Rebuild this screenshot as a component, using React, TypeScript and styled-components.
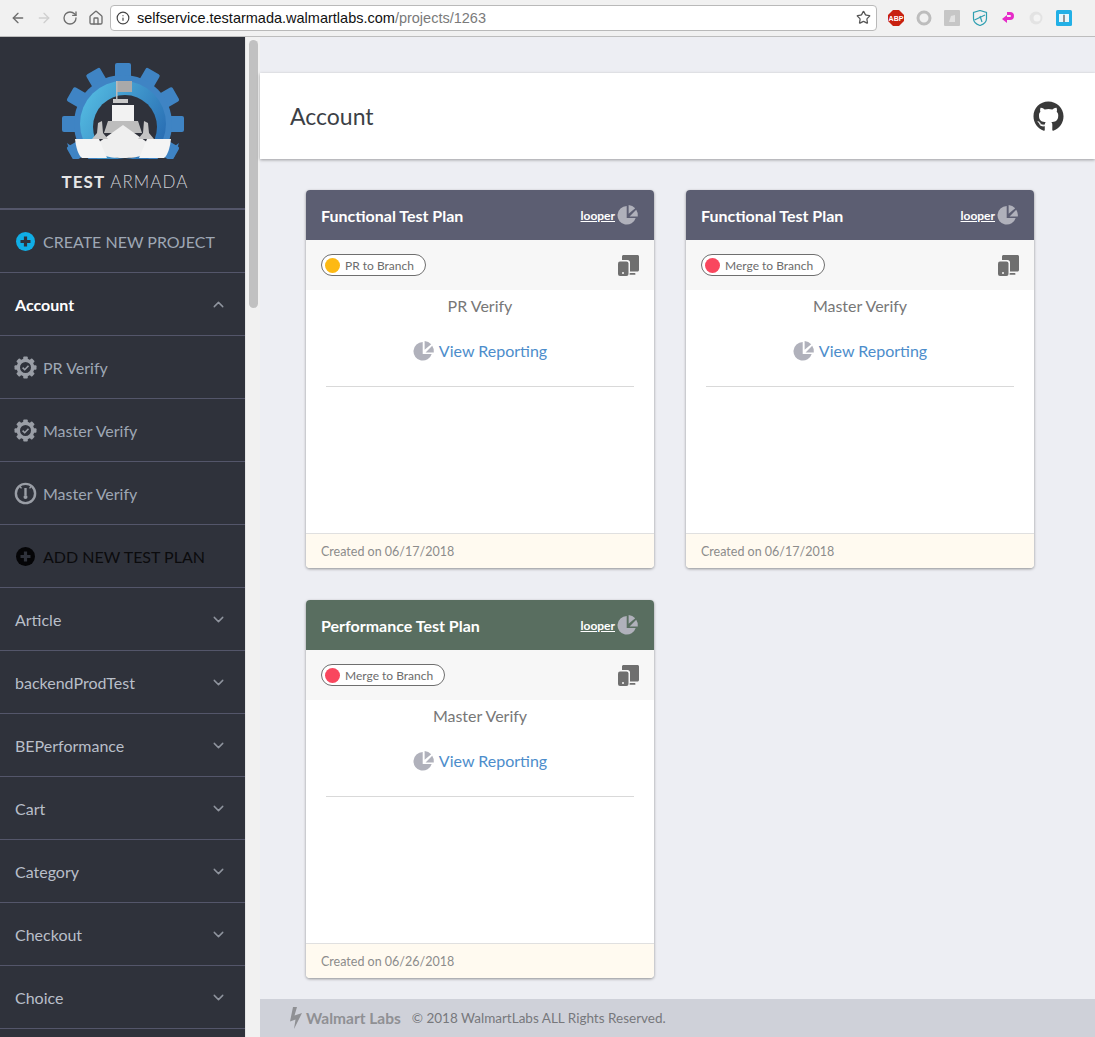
import React from "react";
import styled, { createGlobalStyle } from "styled-components";
import { FaGithub } from "react-icons/fa";
import { ChevronDown, ChevronUp, ArrowLeft, ArrowRight, RotateCw, Home, Info, Star } from "lucide-react";

const GlobalStyle = createGlobalStyle`
  html, body {
    margin: 0;
    height: 100%;
    overflow: hidden;
    background: #edeef3;
    font-family: "Lato", "Noto Sans", sans-serif;
  }
  * { box-sizing: border-box; }
`;

const Page = styled.div`
  width: 1095px;
  height: 1037px;
  overflow: hidden;
  display: flex;
  flex-direction: column;
`;

const BrowserBar = styled.div`
  height: 37px;
  flex: none;
  display: flex;
  align-items: center;
  padding: 0 0 1px 10px;
  background: #f1f1f1;
  border-bottom: 1px solid #bdbdbd;
  color: #6e6e6e;
`;

const NavButton = styled.span<{ $off?: boolean; $gap?: number }>`
  display: flex;
  width: 16px;
  margin-right: ${(p) => p.$gap ?? 10}px;
  color: ${(p) => (p.$off ? "#cfcfcf" : "#6e6e6e")};
`;

const UrlBox = styled.div`
  width: 767px;
  height: 26px;
  margin-left: -1px;
  display: flex;
  align-items: center;
  padding: 0 5px 0 5px;
  background: #fff;
  border: 1px solid #b9b9b9;
  border-radius: 4px;
  font-family: "Liberation Sans", sans-serif;
  font-size: 14.5px;
  color: #111;
`;

const UrlPath = styled.span`
  color: #7a7a7a;
  flex: 1;
`;

const UrlInfo = styled.span`
  display: flex;
  margin-right: 7px;
  color: #444;
`;

const Extensions = styled.div`
  display: flex;
  align-items: center;
  margin-left: 11px;
  gap: 12px;
`;

const Ext = styled.svg`
  width: 16px;
  height: 16px;
  display: block;
`;

const Body = styled.div`
  flex: 1;
  min-height: 0;
  display: flex;
`;

const Sidebar = styled.aside`
  width: 245px;
  flex: none;
  background: #2f323b;
  overflow: hidden;
`;

const LogoBlock = styled.div`
  height: 173px;
  display: flex;
  flex-direction: column;
  align-items: center;
  padding-top: 26px;
  border-bottom: 2px solid #54566a;
`;

const LogoText = styled.div`
  margin-top: -1px;
  width: 122px;
  font-size: 17px;
  letter-spacing: 1.05px;
  line-height: 20px;
  white-space: nowrap;
  color: #cfd1d6;
  font-weight: 300;
  b {
    font-weight: 700;
    color: #e6e6e6;
  }
`;

const MenuRow = styled.div<{ $tall?: boolean }>`
  height: 63px;
  display: flex;
  align-items: center;
  padding: 0 18px 0 15px;
  border-bottom: 1px solid #54566a;
`;

const MenuIcon = styled.span`
  width: 28px;
  margin-left: -4px;
  margin-right: 4px;
  flex: none;
  display: flex;
  justify-content: center;
`;

const MenuLabel = styled.span<{ $tone?: "muted" | "white" | "black" | "plain" }>`
  flex: 1;
  font-size: 16px;
  white-space: nowrap;
  color: ${(p) =>
    p.$tone === "white" ? "#fff" : p.$tone === "black" ? "#0b0b0d" : p.$tone === "plain" ? "#b9bfc9" : "#9ea7b4"};
  font-weight: ${(p) => (p.$tone === "white" ? 700 : 400)};
`;

const Chevron = styled.span`
  display: flex;
  color: #8f949e;
`;

const Scrollbar = styled.div`
  width: 15px;
  flex: none;
  background: #f1f1f1;
  border-left: 1px solid #e4e4e4;
  padding: 3px 2px 0 3px;
`;

const ScrollThumb = styled.div`
  height: 268px;
  border-radius: 5px;
  background: #c1c1c1;
`;

const Main = styled.main`
  flex: 1;
  min-width: 0;
  display: flex;
  flex-direction: column;
  padding-top: 36px;
  background: #edeef3;
`;

const TopHeader = styled.header`
  height: 86px;
  flex: none;
  display: flex;
  align-items: center;
  justify-content: space-between;
  padding: 0 31px 0 30px;
  background: #fff;
  box-shadow: 0 1px 3px rgba(0, 0, 0, 0.35);
`;

const HeaderTitle = styled.h1`
  margin: 0;
  font-size: 23px;
  font-weight: 400;
  color: #3c3f46;
`;

const GitLink = styled.span`
  display: flex;
  color: #3a3a3a;
`;

const CardGrid = styled.div`
  flex: 1;
  display: grid;
  grid-template-columns: 348px 348px;
  grid-auto-rows: 378px;
  column-gap: 32px;
  row-gap: 32px;
  padding: 31px 0 0 46px;
`;

const Card = styled.article`
  display: flex;
  flex-direction: column;
  background: #fff;
  border-radius: 4px;
  box-shadow: 0 1px 3px rgba(0, 0, 0, 0.4);
  overflow: hidden;
`;

const CardHead = styled.div<{ $color: string }>`
  height: 50px;
  flex: none;
  display: flex;
  align-items: center;
  justify-content: space-between;
  padding: 0 15px;
  background: ${(p) => p.$color};
`;

const CardTitle = styled.span`
  font-size: 16px;
  font-weight: 700;
  color: #fff;
`;

const Looper = styled.span`
  display: flex;
  align-items: center;
  gap: 2px;
  font-size: 12px;
  font-weight: 700;
  color: #fff;
  text-decoration: underline;
`;

const CardSub = styled.div`
  height: 50px;
  flex: none;
  display: flex;
  align-items: center;
  justify-content: space-between;
  padding: 0 15px;
  background: #f7f7f7;
`;

const Badge = styled.span`
  height: 22px;
  display: flex;
  align-items: center;
  gap: 5px;
  padding: 0 11px 0 3px;
  border: 1px solid #6f6f6f;
  border-radius: 11px;
  font-size: 12px;
  color: #6c6c6c;
  background: #fff;
`;

const Dot = styled.i<{ $color: string }>`
  width: 15px;
  height: 15px;
  border-radius: 50%;
  background: ${(p) => p.$color};
`;

const CardBody = styled.div`
  flex: 1;
  display: flex;
  flex-direction: column;
  align-items: center;
  padding: 5px 20px 0;
`;

const PlanName = styled.div`
  font-size: 16px;
  line-height: 22px;
  color: #777;
`;

const Reporting = styled.div`
  width: 100%;
  height: 47px;
  margin-top: 23px;
  display: flex;
  align-items: flex-start;
  padding-top: 0;
  justify-content: center;
  gap: 4px;
  border-bottom: 1px solid #d9d9d9;
  font-size: 16px;
  line-height: 22px;
  color: #4d8dcb;
`;

const CardFoot = styled.div`
  height: 35px;
  flex: none;
  display: flex;
  align-items: center;
  padding: 0 15px;
  background: #fffaf0;
  border-top: 1px solid #e0e0e0;
  font-size: 12.5px;
  color: #8c8c8c;
`;

const Footer = styled.footer`
  height: 38px;
  flex: none;
  display: flex;
  align-items: center;
  padding-left: 29px;
  background: #cfd1d9;
  color: #8a8b8f;
`;

const Brand = styled.span`
  display: flex;
  align-items: center;
  gap: 2px;
  font-size: 15.5px;
  font-weight: 700;
  color: #8f9094;
  margin-right: 11px;
`;

const Copy = styled.span`
  font-size: 13.5px;
  color: #77787c;
`;

function Logo() {
  const teeth = Array.from({ length: 12 }, (_, i) => i * 30);
  return (
    <svg width="122" height="110" viewBox="0 0 122 110">
      <defs>
        <linearGradient id="ring" x1="0" y1="0" x2="1" y2="0.6">
          <stop offset="0" stopColor="#58c3e6" />
          <stop offset="1" stopColor="#2a6fb4" />
        </linearGradient>
      </defs>
      {teeth.map((a) => (
        <rect key={a} x="53" y="0" width="16" height="16" rx="2" fill="#3f84c4" transform={`rotate(${a} 61 61)`} />
      ))}
      <circle cx="61" cy="61" r="49" fill="#3f84c4" />
      <circle cx="61" cy="61" r="43" fill="url(#ring)" />
      <circle cx="63" cy="64" r="32" fill="#2f323b" />
      <rect x="0" y="96" width="122" height="14" fill="#2f323b" />
      <path d="M5 80 L22 92 L10 94 Z" fill="#3f84c4" />
      <path d="M117 80 L100 92 L112 94 Z" fill="#3f84c4" />
      <path d="M54 18 H70 V29 H54 Z" fill="#a9a9a9" />
      <rect x="54" y="18" width="1.5" height="22" fill="#bbb" />
      <path d="M51 36 H66 V40 H51 Z" fill="#c9c9c9" />
      <path d="M50 42 H72 V58 H50 Z" fill="#f2f2f2" />
      <path d="M46 58 H76 L80 70 H42 Z" fill="#bdbdbd" />
      <path d="M61 62 L89 82 C86 92 78 95 61 95 C44 95 36 92 33 82 Z" fill="#efefef" />
      <path d="M13 76 H37 L45 95 H20 C16 92 14 84 13 76 Z" fill="#f4f4f4" />
      <path d="M109 76 H85 L77 95 H102 C106 92 108 84 109 76 Z" fill="#f4f4f4" />
      <path d="M36 60 L40 58 L41 70 L46 76 H30 L35 70 Z" fill="#c4c4c4" />
      <path d="M86 60 L82 58 L81 70 L76 76 H92 L87 70 Z" fill="#c4c4c4" />
    </svg>
  );
}

function PlusIcon({ bg, fg }: { bg: string; fg: string }) {
  return (
    <svg width="19" height="19" viewBox="0 0 19 19">
      <circle cx="9.5" cy="9.5" r="9.5" fill={bg} />
      <path d="M9.5 4.5v10M4.5 9.5h10" stroke={fg} strokeWidth="3.2" />
    </svg>
  );
}

function GearCheck() {
  const teeth = Array.from({ length: 8 }, (_, i) => i * 45);
  return (
    <svg width="23" height="23" viewBox="0 0 23 23">
      {teeth.map((a) => (
        <rect key={a} x="9.2" y="0.5" width="4.6" height="5" rx="1" fill="#9a9ea6" transform={`rotate(${a} 11.5 11.5)`} />
      ))}
      <circle cx="11.5" cy="11.5" r="7.2" fill="none" stroke="#9a9ea6" strokeWidth="3.4" />
      <path d="M8.6 11.6l2.1 2.1 3.8-4" fill="none" stroke="#9a9ea6" strokeWidth="1.6" />
    </svg>
  );
}

function Gauge() {
  return (
    <svg width="23" height="23" viewBox="0 0 23 23">
      <circle cx="11.5" cy="11.5" r="9.6" fill="none" stroke="#9a9ea6" strokeWidth="2.4" />
      <path d="M11.5 6v7" stroke="#9a9ea6" strokeWidth="2.4" />
      <circle cx="11.5" cy="15" r="2" fill="#9a9ea6" />
      <path d="M5.5 4l2 2.4M17.5 4l-2 2.4" stroke="#9a9ea6" strokeWidth="1.4" />
    </svg>
  );
}

function PieIcon({ size = 22 }: { size?: number }) {
  return (
    <svg width={size} height={size} viewBox="0 0 22 22">
      <path d="M9.7 2a9.3 9.3 0 1 0 9 12H9.7Z" fill="#b0b1bb" />
      <path d="M11.6 1a9.5 9.5 0 0 1 6.6 3.2l-6.6 5.6Z" fill="#b0b1bb" />
      <path d="M19.2 5.8a9.5 9.5 0 0 1 1.6 6.6H12.6Z" fill="#b0b1bb" />
    </svg>
  );
}

function Devices() {
  return (
    <svg width="21" height="21" viewBox="0 0 21 21">
      <path d="M4 1.5C4 .7 4.7 0 5.5 0h14c.8 0 1.5.7 1.500 1.500V15c0 .8-.7 1.500-1.500 1.500H12V7.500C12 6 11 5 9.500 5H4Z" fill="#6f6f6f" />
      <rect x="11.500" y="18" width="6" height="1.800" rx=".9" fill="#6f6f6f" />
      <rect x="0" y="6.500" width="10.500" height="14.500" rx="2" fill="#6f6f6f" />
      <circle cx="5" cy="18" r="1" fill="#f7f7f7" />
    </svg>
  );
}

function Bolt() {
  return (
    <svg width="15" height="22" viewBox="0 0 15 22">
      <path d="M4 0h4L5.500 8.500 13 6 5 22l1.500-9.500L1 14.500Z" fill="#8f9094" />
    </svg>
  );
}

type Plan = { title: string; color: string; badge: string; dot: string; name: string; date: string };

const plans: Plan[] = [
  { title: "Functional Test Plan", color: "#5c5e72", badge: "PR to Branch", dot: "#fdb913", name: "PR Verify", date: "06/17/2018" },
  { title: "Functional Test Plan", color: "#5c5e72", badge: "Merge to Branch", dot: "#f9475e", name: "Master Verify", date: "06/17/2018" },
  { title: "Performance Test Plan", color: "#596e60", badge: "Merge to Branch", dot: "#f9475e", name: "Master Verify", date: "06/26/2018" },
];

const collapsed = ["Article", "backendProdTest", "BEPerformance", "Cart", "Category", "Checkout", "Choice", "Cookies"];

export default function App() {
  return (
    <Page>
      <GlobalStyle />
      <BrowserBar>
        <NavButton><ArrowLeft size={16} /></NavButton>
        <NavButton $off><ArrowRight size={16} /></NavButton>
        <NavButton><RotateCw size={16} /></NavButton>
        <NavButton $gap={7}><Home size={16} /></NavButton>
        <UrlBox>
          <UrlInfo><Info size={14} /></UrlInfo>
          selfservice.testarmada.walmartlabs.com
          <UrlPath>/projects/1263</UrlPath>
          <Star size={15} color="#555" />
        </UrlBox>
        <Extensions>
          <Ext viewBox="0 0 16 16">
            <path d="M5 0h6l5 5v6l-5 5H5l-5-5V5Z" fill="#c8200f" />
            <text x="8" y="10.500" fontSize="7" fontWeight="700" textAnchor="middle" fill="#fff" fontFamily="Liberation Sans">ABP</text>
          </Ext>
          <Ext viewBox="0 0 16 16">
            <circle cx="8" cy="8" r="6" fill="none" stroke="#bdbdbd" strokeWidth="3" />
          </Ext>
          <Ext viewBox="0 0 16 16">
            <rect width="16" height="16" rx="1" fill="#c6c6c6" />
            <path d="M5 12l2-6 4-1v7Z" fill="#e2e2e2" />
          </Ext>
          <Ext viewBox="0 0 16 16">
            <path d="M8 .5l6.500 2v6c0 3.500-3 5.800-6.500 7-3.500-1.200-6.500-3.500-6.500-7v-6Z" fill="none" stroke="#2f9fb1" strokeWidth="1.200" />
            <path d="M2.500 10L13 5M8 6l2 6" stroke="#2f9fb1" strokeWidth="1.200" fill="none" />
          </Ext>
          <Ext viewBox="0 0 16 16">
            <path d="M7 2h3a4 4 0 0 1 0 8H7v3L2 9l5-4v2h3a1 1 0 0 0 0-2H7Z" fill="#e62bc8" />
          </Ext>
          <Ext viewBox="0 0 16 16">
            <circle cx="8" cy="8" r="6.500" fill="#e3e3e3" />
            <circle cx="9" cy="8" r="3.500" fill="#f4f4f4" />
          </Ext>
          <Ext viewBox="0 0 16 16">
            <rect width="16" height="16" rx="1.500" fill="#22b0e6" />
            <path d="M3 4h4.500l.5 1 .5-1H13v8H3Z" fill="#e8f6fb" />
            <path d="M8 5v7" stroke="#333" />
          </Ext>
        </Extensions>
      </BrowserBar>
      <Body>
        <Sidebar>
          <LogoBlock>
            <Logo />
            <LogoText><b>TEST</b> ARMADA</LogoText>
          </LogoBlock>
          <MenuRow>
            <MenuIcon><PlusIcon bg="#10aee6" fg="#2f323b" /></MenuIcon>
            <MenuLabel>CREATE NEW PROJECT</MenuLabel>
          </MenuRow>
          <MenuRow>
            <MenuLabel $tone="white">Account</MenuLabel>
            <Chevron><ChevronUp size={17} /></Chevron>
          </MenuRow>
          <MenuRow>
            <MenuIcon><GearCheck /></MenuIcon>
            <MenuLabel>PR Verify</MenuLabel>
          </MenuRow>
          <MenuRow>
            <MenuIcon><GearCheck /></MenuIcon>
            <MenuLabel>Master Verify</MenuLabel>
          </MenuRow>
          <MenuRow>
            <MenuIcon><Gauge /></MenuIcon>
            <MenuLabel>Master Verify</MenuLabel>
          </MenuRow>
          <MenuRow>
            <MenuIcon><PlusIcon bg="#050507" fg="#2f323b" /></MenuIcon>
            <MenuLabel $tone="black">ADD NEW TEST PLAN</MenuLabel>
          </MenuRow>
          {collapsed.map((name) => (
            <MenuRow key={name}>
              <MenuLabel $tone="plain">{name}</MenuLabel>
              <Chevron><ChevronDown size={17} /></Chevron>
            </MenuRow>
          ))}
        </Sidebar>
        <Scrollbar><ScrollThumb /></Scrollbar>
        <Main>
          <TopHeader>
            <HeaderTitle>Account</HeaderTitle>
            <GitLink><FaGithub size={31} /></GitLink>
          </TopHeader>
          <CardGrid>
            {plans.map((plan, i) => (
              <Card key={i}>
                <CardHead $color={plan.color}>
                  <CardTitle>{plan.title}</CardTitle>
                  <Looper>looper<PieIcon /></Looper>
                </CardHead>
                <CardSub>
                  <Badge><Dot $color={plan.dot} />{plan.badge}</Badge>
                  <Devices />
                </CardSub>
                <CardBody>
                  <PlanName>{plan.name}</PlanName>
                  <Reporting><PieIcon />View Reporting</Reporting>
                </CardBody>
                <CardFoot>Created on {plan.date}</CardFoot>
              </Card>
            ))}
          </CardGrid>
          <Footer>
            <Brand><Bolt />Walmart Labs</Brand>
            <Copy>© 2018 WalmartLabs ALL Rights Reserved.</Copy>
          </Footer>
        </Main>
      </Body>
    </Page>
  );
}
